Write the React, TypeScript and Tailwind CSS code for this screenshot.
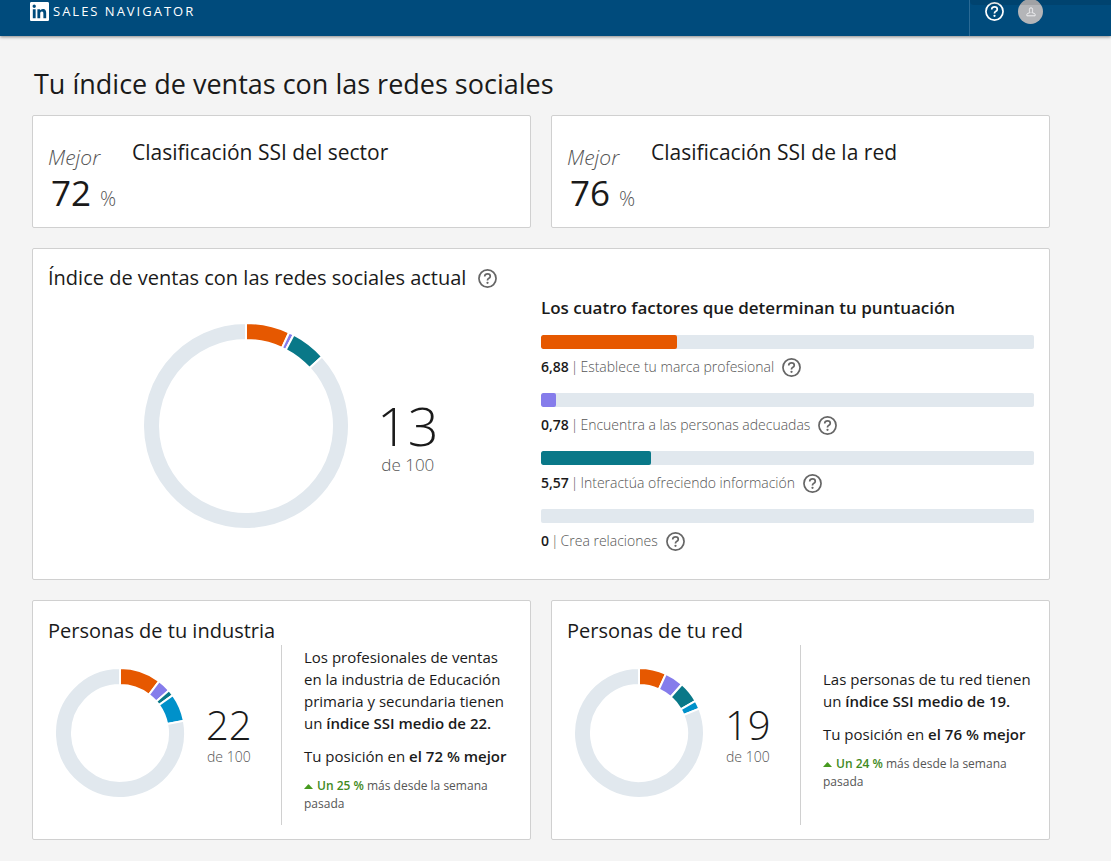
const ORANGE = '#e65800'
const PURPLE = '#857ceb'
const TEAL = '#097888'
const BLUE = '#0091ca'
const TRACK = '#e1e8ee'

const factors = [
  { label: 'Establece tu marca profesional', score: '6,88', value: 6.88, color: ORANGE },
  { label: 'Encuentra a las personas adecuadas', score: '0,78', value: 0.78, color: PURPLE },
  { label: 'Interactúa ofreciendo información', score: '5,57', value: 5.57, color: TEAL },
  { label: 'Crea relaciones', score: '0', value: 0, color: BLUE },
]

const groups = [
  {
    title: 'Personas de tu industria',
    intro: 'Los profesionales de ventas en la industria de Educación primaria y secundaria tienen un ',
    score: 22,
    rank: '72',
    change: '25',
    values: [10.3, 3.3, 1.5, 6.9],
  },
  {
    title: 'Personas de tu red',
    intro: 'Las personas de tu red tienen un ',
    score: 19,
    rank: '76',
    change: '24',
    values: [6.8, 4.7, 5.3, 2.1],
  },
]

function HelpIcon({ className }: { className: string }) {
  return (
    <svg viewBox="0 0 20 20" className={className} fill="none" stroke="currentColor" aria-hidden="true">
      <circle cx="10" cy="10" r="9" strokeWidth="1.8" />
      <path d="M7.1 7.9v-.3c0-1.5 1.2-2.5 2.9-2.5s2.9 1 2.9 2.4c0 1-.5 1.7-1.4 2.2-1 .6-1.5 1-1.5 2v.4" strokeWidth="1.8" />
      <circle cx="10" cy="14.5" r="1.2" fill="currentColor" stroke="none" />
    </svg>
  )
}

function HelpButton({ label }: { label: string }) {
  return (
    <button type="button" aria-label={label} className="shrink-0 text-[#666]">
      <HelpIcon className="size-[19px]" />
    </button>
  )
}

// Ring of 100 points; the rest of the circle after the last value is the track.
function Donut({ values, radius, className }: { values: number[]; radius: number; className: string }) {
  const colors = [ORANGE, PURPLE, TEAL, BLUE]
  const outer = radius + 1
  const inner = radius - 16
  const total = values.reduce((a, b) => a + b, 0)
  const slices = [...values.map((v, i) => ({ v, color: colors[i] })), { v: 100 - total, color: TRACK }]

  const point = (pct: number, r: number) => {
    const a = (pct / 100) * Math.PI * 2
    return `${(Math.sin(a) * r).toFixed(2)} ${(-Math.cos(a) * r).toFixed(2)}`
  }

  let start = 0
  return (
    <svg viewBox={`${-outer} ${-outer} ${outer * 2} ${outer * 2}`} className={className} aria-hidden="true">
      {slices.map((s, i) => {
        const end = start + s.v
        const large = s.v > 50 ? 1 : 0
        const d = `M${point(start, outer)}A${outer} ${outer} 0 ${large} 1 ${point(end, outer)}L${point(end, inner)}A${inner} ${inner} 0 ${large} 0 ${point(start, inner)}Z`
        start = end
        return s.v > 0 ? <path key={i} d={d} fill={s.color} stroke="#fff" strokeWidth="2" /> : null
      })}
    </svg>
  )
}

function RankCard({ title, rank }: { title: string; rank: string }) {
  return (
    <section className="flex rounded-xs border border-[#d0d0d0] bg-white px-[15px] pt-[22px] pb-3">
      <div className="w-[84px] shrink-0">
        <div className="pt-[5px] text-[21px] leading-7 font-light italic text-[#555]">Mejor</div>
        <div className="flex items-baseline gap-[9px] pl-[3px] leading-11">
          <span className="text-[35px] leading-11 text-[#1a1a1a]">{rank}</span>
          <span className="text-xl font-light text-[#555]">%</span>
        </div>
      </div>
      <h2 className="text-[21px] leading-7">{title}</h2>
    </section>
  )
}

export default function App() {
  return (
    <div className="min-h-screen bg-[#f4f4f4] font-['Open_Sans','Noto_Sans',sans-serif] text-[#1a1a1a]">
      <header className="relative flex h-9 justify-between bg-[#004b7c] pl-[30px] text-white shadow-[0_1px_3px_rgba(0,0,0,0.45)]">
        <a href="#" className="flex h-[23px] items-center gap-1">
          <svg viewBox="0 0 24 24" className="size-[19px]" fill="currentColor" aria-hidden="true">
            <path d="M20.447 20.452h-3.554v-5.569c0-1.328-.027-3.037-1.852-3.037-1.853 0-2.136 1.445-2.136 2.939v5.667H9.351V9h3.414v1.561h.046c.477-.9 1.637-1.85 3.37-1.85 3.601 0 4.267 2.37 4.267 5.455v6.286zM5.337 7.433c-1.144 0-2.063-.926-2.063-2.065 0-1.138.92-2.063 2.063-2.063 1.14 0 2.064.925 2.064 2.063 0 1.139-.925 2.065-2.064 2.065zm1.782 13.019H3.555V9h3.564v11.452zM22.225 0H1.771C.792 0 0 .774 0 1.729v20.542C0 23.227.792 24 1.771 24h20.451C23.2 24 24 23.227 24 22.271V1.729C24 .774 23.2 0 22.222 0h.003z" />
          </svg>
          <span className="text-[13px] font-medium tracking-[2px]">SALES NAVIGATOR</span>
        </a>
        <div className="relative flex w-[142px] items-start gap-[14px] border-l border-[#2a6a95] pl-[15px]">
          <button type="button" aria-label="Ayuda" className="pt-[2px]">
            <HelpIcon className="size-[19px]" />
          </button>
          <button type="button" aria-label="Cuenta" className="-mt-px flex size-[25px] items-center justify-center rounded-full bg-[#b4b5b8]">
            <svg viewBox="0 0 10 10" className="size-[10px]" fill="none" stroke="#f0f0f2" aria-hidden="true">
              <path d="M3.4 2.4a1.6 1.6 0 0 1 3.2 0v1.3c0 .8-.4 1.3-.7 1.8l2.6 1c.4.2.6.5.6.9v1.4H.9V7.4c0-.4.2-.7.6-.9l2.6-1c-.3-.5-.7-1-.7-1.8z" />
            </svg>
          </button>
          <div className="pointer-events-none absolute inset-x-0 top-0 h-[5px] rounded-bl-sm bg-black/10" />
        </div>
      </header>

      <main className="pt-7 pr-[61px] pb-5 pl-8">
        <h1 className="pl-[2px] text-[27px] leading-10">Tu índice de ventas con las redes sociales</h1>

        <div className="mt-[11px] grid grid-cols-2 gap-5">
          <RankCard title="Clasificación SSI del sector" rank="72" />
          <RankCard title="Clasificación SSI de la red" rank="76" />
        </div>

        {/* Current index */}
        <section className="mt-5 rounded-xs border border-[#d0d0d0] bg-white px-[15px] pt-[15px] pb-3">
          <div className="flex items-center gap-3">
            <h2 className="text-xl leading-7">Índice de ventas con las redes sociales actual</h2>
            <HelpButton label="Más información sobre el índice" />
          </div>
          <div className="grid grid-cols-2">
            <div className="flex gap-7 pt-[31px] pl-[95px]">
              <Donut values={factors.map((f) => f.value)} radius={102} className="size-[206px] shrink-0" />
              <div className="pt-[74px] text-center">
                <div className="text-[54px] leading-[56px] font-light">13</div>
                <div className="text-[17px] leading-6 font-light text-[#555]">de 100</div>
              </div>
            </div>
            <div>
              <h3 className="pt-1 text-[17px] leading-6 font-semibold">Los cuatro factores que determinan tu puntuación</h3>
              <ul className="mt-[15px]">
                {factors.map((f) => (
                  <li key={f.label} className="h-[58px]">
                    <div className="h-[14px] overflow-hidden rounded-xs bg-[#e1e8ee]">
                      <div className="h-full rounded-xs" style={{ width: `${(f.value / 25) * 100}%`, backgroundColor: f.color }} />
                    </div>
                    <div className="mt-2 flex items-center gap-2 text-sm leading-5">
                      <div className="flex gap-[2px] font-light text-[#555]">
                        <strong className="font-semibold text-[#1a1a1a]">{f.score}</strong>
                        <span>|</span>
                        <span>{f.label}</span>
                      </div>
                      <HelpButton label={`Más información: ${f.label}`} />
                    </div>
                  </li>
                ))}
              </ul>
            </div>
          </div>
        </section>

        <div className="mt-5 grid grid-cols-2 gap-5">
          {groups.map((g) => (
            <section key={g.title} className="rounded-xs border border-[#d0d0d0] bg-white px-[15px] pt-4 pb-[14px]">
              <h2 className="text-xl leading-7">{g.title}</h2>
              <div className="flex h-[180px]">
                <div className="flex w-[233px] shrink-0 gap-[21px] pt-[23px] pl-[7px]">
                  <Donut values={g.values} radius={64} className="size-[130px] shrink-0" />
                  <div className="pt-[33px] text-center">
                    <div className="text-[40px] leading-12 font-light">{g.score}</div>
                    <div className="text-sm leading-4 font-light text-[#555]">de 100</div>
                  </div>
                </div>
                <div className="flex flex-1 flex-col justify-center border-l border-[#d0d0d0] pb-3 pl-[22px]">
                  <p className="text-[15px] leading-[22px]">
                    {g.intro}
                    <strong className="font-semibold">{`índice SSI medio de ${g.score}.`}</strong>
                  </p>
                  <p className="mt-[11px] text-[15px] leading-[22px]">
                    Tu posición en <strong className="font-semibold">{`el ${g.rank} % mejor`}</strong>
                  </p>
                  <p className="mt-[10px] text-xs leading-[18px] text-[#555]">
                    <svg viewBox="0 0 9 5" className="mr-1 inline-block h-[5px] w-[9px]" fill="#469a1f" aria-hidden="true">
                      <path d="M0 5 4 .6a.7.7 0 0 1 1 0L9 5z" />
                    </svg>
                    <strong className="font-semibold text-[#3f8a1e]">{`Un ${g.change} %`}</strong> más desde la semana pasada
                  </p>
                </div>
              </div>
            </section>
          ))}
        </div>
      </main>
    </div>
  )
}
